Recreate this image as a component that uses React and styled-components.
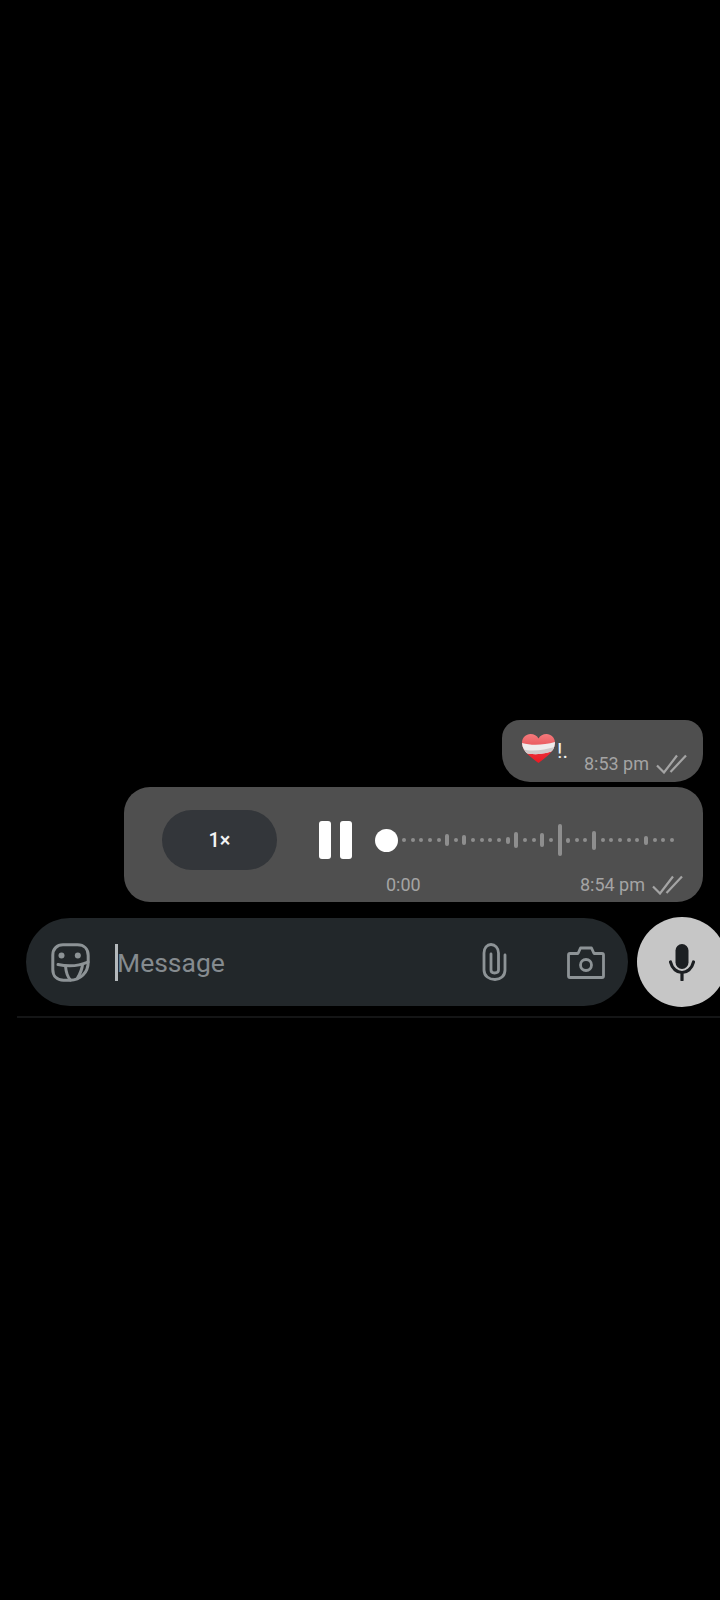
import styled, { createGlobalStyle } from "styled-components";

const bars = [4, 4, 4, 4, 4, 12, 4, 10, 4, 4, 4, 4, 7, 16, 4, 4, 14, 4, 32, 5, 4, 4, 19, 4, 4, 4, 4, 4, 9, 4, 4, 4];

const Checks = () => (
  <CheckIcon viewBox="0 0 31 20">
    <path d="M1 11.5L8 18.5L21 1.5" />
    <path d="M14.5 18L30 1.5" />
  </CheckIcon>
);

const Heart = () => (
  <svg width="33" height="29" viewBox="0 0 33 29">
    <defs>
      <linearGradient id="heartFill" x1="0" y1="0" x2="0" y2="1">
        <stop offset="0" stopColor="#f47a7c" />
        <stop offset="0.4" stopColor="#ea5a5e" />
        <stop offset="0.7" stopColor="#e92a34" />
        <stop offset="1" stopColor="#ee1822" />
      </linearGradient>
      <clipPath id="heartClip">
        <path d="M16.5 29C11 24.5 0 18 0 9C0 3.5 4 0 8.5 0C12 0 15 1.7 16.5 4.5C18 1.7 21 0 24.5 0C29 0 33 3.5 33 9C33 18 22 24.5 16.5 29Z" />
      </clipPath>
    </defs>
    <g clipPath="url(#heartClip)">
      <rect width="33" height="29" fill="url(#heartFill)" />
      <path d="M0 9C10 12 22 11 33 8V16C24 20 12 22 0 18Z" fill="#efecec" />
      <path d="M0 15C10 18 22 16 33 13V16C24 20 12 22 0 18Z" fill="#cfcaca" />
    </g>
  </svg>
);

const StickerIcon = () => (
  <StickerSvg width="39" height="39" viewBox="0 0 39 39">
    <path d="M12 1.8H26.5C33 1.8 37.2 6 37.2 12.5V19C37.2 29.5 29.5 37.2 19 37.2H12.5C6 37.2 1.8 33 1.8 26.5V12C1.8 6 6 1.8 12 1.8Z" />
    <path d="M7 21.5C16 23.5 28 23 37 19" />
    <path d="M14.5 23C15 29 16.5 34 19.5 37" />
    <path d="M31.5 21.5C31 27 29 31 26.5 35" />
    <Eye cx="10.5" cy="12.5" r="3" />
    <Eye cx="26.8" cy="12.5" r="3" />
  </StickerSvg>
);

const ClipIcon = () => (
  <LineIcon width="25" height="38" viewBox="0 0 25 38">
    <path d="M23 12V27C23 33 18.5 36.5 13 36.5C7 36.5 2 33 2 27V10C2 5 5 1.5 9 1.5C13 1.5 16.5 5 16.5 10V27C16.5 29 15 30 12.5 30C10 30 9 29 9 27V11" />
  </LineIcon>
);

const CameraIcon = () => (
  <LineIcon width="38" height="33" viewBox="0 0 38 33">
    <path d="M3 7.5H11L13.5 2H24.5L27 7.5H35C36 7.5 36.5 8 36.5 9V30C36.5 31 36 31.5 35 31.5H3C2 31.5 1.5 31 1.5 30V9C1.5 8 2 7.5 3 7.5Z" />
    <circle cx="19" cy="19" r="5.5" />
  </LineIcon>
);

const MicIcon = () => (
  <svg width="26" height="37" viewBox="0 0 26 37">
    <rect x="6.5" y="0" width="13" height="25" rx="6.5" fill="#1c1f22" />
    <path
      d="M1.5 18C3 24.5 8 28.5 13 28.5C18 28.5 23 24.5 24.5 18M13 28.5V36"
      fill="none"
      stroke="#1c1f22"
      strokeWidth="3.2"
      strokeLinecap="round"
    />
  </svg>
);

const App = () => {
  return (
    <Page>
      <GlobalStyle />
      <Thread>
        <TextBubble>
          <EmojiLine>
            <Heart />
            <Punctuation>!.</Punctuation>
          </EmojiLine>
          <Meta>
            <Time>8:53 pm</Time>
            <Checks />
          </Meta>
        </TextBubble>
        <VoiceBubble>
          <PlayerRow>
            <SpeedButton>1×</SpeedButton>
            <PauseButton>
              <PauseBar />
              <PauseBar />
            </PauseButton>
            <Knob />
            <Wave>
              {bars.map((height, i) => (
                <WaveBar key={i} $height={height} />
              ))}
            </Wave>
          </PlayerRow>
          <VoiceFooter>
            <Time>0:00</Time>
            <Meta>
              <Time>8:54 pm</Time>
              <Checks />
            </Meta>
          </VoiceFooter>
        </VoiceBubble>
      </Thread>
      <Composer>
        <InputPill>
          <StickerIcon />
          <Cursor />
          <Placeholder>Message</Placeholder>
          <ClipSlot>
            <ClipIcon />
          </ClipSlot>
          <CameraIcon />
        </InputPill>
        <MicButton>
          <MicIcon />
        </MicButton>
      </Composer>
      <Rule />
    </Page>
  );
};

const GlobalStyle = createGlobalStyle`
  html, body {
    margin: 0;
    background: #000;
    overflow: hidden;
  }
`;

const Page = styled.div`
  width: 720px;
  height: 1600px;
  padding-top: 720px;
  box-sizing: border-box;
  background: #000;
  overflow: hidden;
  font-family: Roboto, "Liberation Sans", sans-serif;
`;

const Thread = styled.div`
  display: flex;
  flex-direction: column;
  align-items: flex-end;
  gap: 5px;
  padding-right: 17px;
`;

const TextBubble = styled.div`
  display: flex;
  justify-content: space-between;
  align-items: flex-end;
  box-sizing: border-box;
  width: 201px;
  height: 62px;
  padding: 14px 16px 7px 20px;
  background: #4f4f4f;
  border-radius: 18px 18px 28px 28px;
`;

const EmojiLine = styled.div`
  display: flex;
  align-items: flex-end;
  gap: 2px;
  align-self: flex-start;
`;

const Punctuation = styled.span`
  color: #f2f2f2;
  font-size: 21px;
  line-height: 24px;
`;

const Meta = styled.div`
  display: flex;
  align-items: center;
  gap: 7px;
`;

const Time = styled.span`
  color: #a4a4a4;
  font-size: 18px;
  line-height: 22px;
`;

const CheckIcon = styled.svg`
  width: 31px;
  height: 20px;
  fill: none;
  stroke: #a4a4a4;
  stroke-width: 2.2;
`;

const VoiceBubble = styled.div`
  box-sizing: border-box;
  width: 579px;
  height: 115px;
  padding: 23px 20px 0 38px;
  background: #4f4f4f;
  border-radius: 26px;
`;

const PlayerRow = styled.div`
  display: flex;
  align-items: center;
`;

const SpeedButton = styled.div`
  display: flex;
  align-items: center;
  justify-content: center;
  width: 115px;
  height: 60px;
  margin-right: 42px;
  background: #33363a;
  border-radius: 30px;
  color: #f4f4f4;
  font-size: 20px;
  font-weight: 500;
`;

const PauseButton = styled.div`
  display: flex;
  gap: 9px;
  margin-right: 23px;
`;

const PauseBar = styled.div`
  width: 12px;
  height: 38px;
  background: #fff;
  border-radius: 3px;
`;

const Knob = styled.div`
  width: 23px;
  height: 23px;
  margin-right: 4px;
  background: #fff;
  border-radius: 50%;
`;

const Wave = styled.div`
  display: flex;
  align-items: center;
  gap: 4.65px;
`;

const WaveBar = styled.div`
  width: 4px;
  height: ${(p) => p.$height}px;
  background: #8e8e8e;
  border-radius: 2px;
`;

const VoiceFooter = styled.div`
  display: flex;
  justify-content: space-between;
  align-items: center;
  margin-top: 4px;
  padding-left: 224px;
`;

const Composer = styled.div`
  display: flex;
  align-items: center;
  gap: 9px;
  margin-top: 15px;
  padding-left: 26px;
`;

const InputPill = styled.div`
  display: flex;
  align-items: center;
  flex-shrink: 0;
  box-sizing: border-box;
  width: 602px;
  height: 88px;
  padding: 0 23px 0 25px;
  background: #22272a;
  border-radius: 44px;
`;

const LineIcon = styled.svg`
  flex-shrink: 0;
  fill: none;
  stroke: #8d9396;
  stroke-width: 2.8;
  stroke-linejoin: round;
  stroke-linecap: round;
`;

const StickerSvg = styled(LineIcon)`
  stroke-width: 3;
`;

const Eye = styled.circle`
  fill: #8d9396;
  stroke: none;
`;

const Cursor = styled.div`
  width: 3px;
  height: 37px;
  margin-left: 25px;
  background: #b4b9bc;
`;

const Placeholder = styled.span`
  flex: 1;
  margin-left: -1px;
  color: #858b8f;
  font-size: 26.5px;
  line-height: 37px;
`;

const ClipSlot = styled.div`
  display: flex;
  margin-right: 60px;
`;

const MicButton = styled.div`
  display: flex;
  align-items: center;
  justify-content: center;
  flex-shrink: 0;
  width: 90px;
  height: 90px;
  background: #c6c6c6;
  border-radius: 50%;
`;

const Rule = styled.div`
  height: 2px;
  margin: 9px 0 0 17px;
  background: #141516;
`;

export default App;
